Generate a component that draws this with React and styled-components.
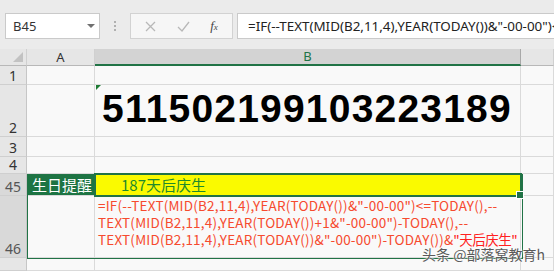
import React from "react";
import styled, { createGlobalStyle } from "styled-components";

const GlobalStyle = createGlobalStyle`
  body {
    margin: 0;
    background: #f9f9f9;
    overflow: hidden;
  }
`;

const Page = styled.div`
  position: relative;
  width: 554px;
  height: 271px;
  overflow: hidden;
  font-family: "Noto Sans", "Liberation Sans", sans-serif;
`;

const Toolbar = styled.div`
  height: 49px;
  box-sizing: border-box;
  background: #ebebeb;
  display: flex;
  align-items: flex-start;
  padding: 13px 0 0 5px;
`;

const NameBox = styled.div`
  width: 95px;
  height: 26px;
  box-sizing: border-box;
  background: #fff;
  border: 1px solid #cacaca;
  display: flex;
  align-items: center;
  justify-content: space-between;
  padding: 0 4px 0 7px;
  font-size: 13px;
  color: #333;
`;

const Caret = styled.span`
  width: 0;
  height: 0;
  border-left: 4px solid transparent;
  border-right: 4px solid transparent;
  border-top: 4px solid #707070;
`;

const Grip = styled.div`
  width: 30px;
  height: 26px;
  display: flex;
  flex-direction: column;
  align-items: center;
  justify-content: center;
  gap: 2px;
  span {
    width: 2px;
    height: 2px;
    background: #b0b0b0;
  }
`;

const FxGroup = styled.div`
  width: 103px;
  height: 26px;
  box-sizing: border-box;
  background: #f6f6f6;
  border: 1px solid #d2d2d2;
  display: flex;
  align-items: center;
  justify-content: space-around;
  padding: 0 4px;
`;

const FxLabel = styled.span`
  font-family: "Liberation Serif", serif;
  font-style: italic;
  font-size: 13px;
  color: #444;
  span {
    font-size: 9px;
  }
`;

const FormulaInput = styled.div`
  flex: 1;
  margin-left: 4px;
  height: 26px;
  box-sizing: border-box;
  background: #fff;
  border: 1px solid #cacaca;
  border-right: none;
  padding-left: 10px;
  display: flex;
  align-items: center;
  white-space: nowrap;
  overflow: hidden;
  font-size: 13.4px;
  color: #222;
`;

const Sheet = styled.div`
  position: relative;
  display: grid;
  grid-template-columns: 27px 68px 426px 1fr;
  grid-template-rows: 17px 19px 52px 20px 17px 22px 62px 1fr;
  height: 222px;
`;

const ColHead = styled.div`
  box-sizing: border-box;
  background: ${(p) => (p.$active ? "#d3d3d3" : "#e6e6e6")};
  border-right: 1px solid ${(p) => (p.$active ? "#a8a8a8" : "#d0d0d0")};
  border-bottom: ${(p) => (p.$active ? "2px solid #217346" : "1px solid #b8b8b8")};
  color: ${(p) => (p.$active ? "#217346" : "#333")};
  font-size: 13px;
  display: flex;
  align-items: center;
  justify-content: center;
  line-height: 1;
`;

const Corner = styled(ColHead)`
  position: relative;
  &::after {
    content: "";
    position: absolute;
    right: 3px;
    bottom: 3px;
    border-left: 10px solid transparent;
    border-bottom: 10px solid #c2c2c2;
  }
`;

const RowHead = styled.div`
  box-sizing: border-box;
  background: ${(p) => (p.$active ? "#d9d9d9" : "#e6e6e6")};
  border-right: 1px solid #c6c6c6;
  border-bottom: 1px solid #cfcfcf;
  color: ${(p) => (p.$active ? "#555" : "#333")};
  font-size: 14px;
  display: flex;
  align-items: flex-end;
  justify-content: center;
  padding-bottom: 1px;
  line-height: 1;
`;

const Cell = styled.div`
  box-sizing: border-box;
  background: ${(p) => p.$bg || "#f9f9f9"};
  border-right: 1px solid #dadada;
  border-bottom: 1px solid #dadada;
  position: relative;
  min-width: 0;
`;

const ErrorMark = styled.span`
  position: absolute;
  left: 1px;
  top: 0;
  border-right: 5px solid transparent;
  border-top: 5px solid #1e7b34;
`;

const IdNumber = styled.div`
  position: absolute;
  left: 7px;
  bottom: 8px;
  font-family: "Liberation Sans", Arial, sans-serif;
  font-weight: bold;
  font-size: 39px;
  letter-spacing: 1.2px;
  line-height: 1;
  color: #000;
`;

const LabelCell = styled(Cell)`
  background: #1d7443;
  color: #fff;
  font-family: "Noto Sans CJK SC", sans-serif;
  font-size: 15px;
  display: flex;
  align-items: center;
  padding-left: 5px;
`;

const ResultCell = styled(Cell)`
  background: #fafa00;
  color: #1f8a2c;
  font-family: "Noto Sans CJK SC", sans-serif;
  font-size: 15px;
  display: flex;
  align-items: center;
  padding-left: 26px;
`;

const FormulaText = styled.div`
  padding: 1px 0 0 3px;
  font-family: "Noto Sans CJK SC", sans-serif;
  font-size: 13.5px;
  letter-spacing: 0.2px;
  line-height: 17px;
  color: #f64a2e;
  white-space: pre;
  span {
    color: #ff2020;
    letter-spacing: -0.5px;
  }
`;

const Selection = styled.div`
  position: absolute;
  left: 27px;
  top: 125px;
  width: 496px;
  height: 85px;
  box-sizing: border-box;
  border: 1.5px solid #217346;
  pointer-events: none;
`;

const ActiveCell = styled.div`
  position: absolute;
  left: 94px;
  top: 124px;
  width: 428px;
  height: 24px;
  box-sizing: border-box;
  border: 2px solid #217346;
  &::after {
    content: "";
    position: absolute;
    right: -4px;
    bottom: -4px;
    width: 6px;
    height: 6px;
    background: #217346;
    border: 1px solid #fff;
  }
`;

const Watermark = styled.div`
  position: absolute;
  left: 422px;
  top: 245px;
  font-family: "Noto Sans CJK SC", sans-serif;
  font-size: 14px;
  line-height: 18px;
  color: #5a5a5a;
  white-space: nowrap;
  text-shadow: 0 0 2px #fff, 0 0 2px #fff;
`;

const rows = [
  { n: "1" },
  { n: "2", big: true },
  { n: "3" },
  { n: "4" },
  { n: "45", active: true, reminder: true },
  { n: "46", active: true, formula: true },
  { n: "" },
];

export default function App() {
  return (
    <Page>
      <GlobalStyle />
      <Toolbar>
        <NameBox>
          B45
          <Caret />
        </NameBox>
        <Grip>
          <span />
          <span />
          <span />
        </Grip>
        <FxGroup>
          <svg width="11" height="11" viewBox="0 0 11 11">
            <path d="M1 1 L10 10 M10 1 L1 10" stroke="#b8b8b8" strokeWidth="1.3" />
          </svg>
          <svg width="13" height="11" viewBox="0 0 13 11">
            <path d="M1 6 L5 10 L12 1" stroke="#b8b8b8" strokeWidth="1.3" fill="none" />
          </svg>
          <FxLabel>
            f<span>x</span>
          </FxLabel>
        </FxGroup>
        <FormulaInput>
          =IF(--TEXT(MID(B2,11,4),YEAR(TODAY())&amp;"-00-00")&lt;=TODAY(),--
        </FormulaInput>
      </Toolbar>
      <Sheet>
        <Corner />
        <ColHead>A</ColHead>
        <ColHead $active>B</ColHead>
        <ColHead />
        {rows.map((r, i) => (
          <React.Fragment key={i}>
            <RowHead $active={r.active}>{r.n}</RowHead>
            {r.reminder ? (
              <>
                <LabelCell>生日提醒</LabelCell>
                <ResultCell>187天后庆生</ResultCell>
              </>
            ) : (
              <>
                <Cell />
                <Cell>
                  {r.big && (
                    <>
                      <ErrorMark />
                      <IdNumber>511502199103223189</IdNumber>
                    </>
                  )}
                  {r.formula && (
                    <FormulaText>
                      {'=IF(--TEXT(MID(B2,11,4),YEAR(TODAY())&"-00-00")<=TODAY(),--\n'}
                      {'TEXT(MID(B2,11,4),YEAR(TODAY())+1&"-00-00")-TODAY(),--\n'}
                      {'TEXT(MID(B2,11,4),YEAR(TODAY())&"-00-00")-TODAY())&'}
                      <span>"天后庆生"</span>
                    </FormulaText>
                  )}
                </Cell>
              </>
            )}
            <Cell />
          </React.Fragment>
        ))}
        <Selection />
        <ActiveCell />
      </Sheet>
      <Watermark>头条 @部落窝教育h</Watermark>
    </Page>
  );
}
